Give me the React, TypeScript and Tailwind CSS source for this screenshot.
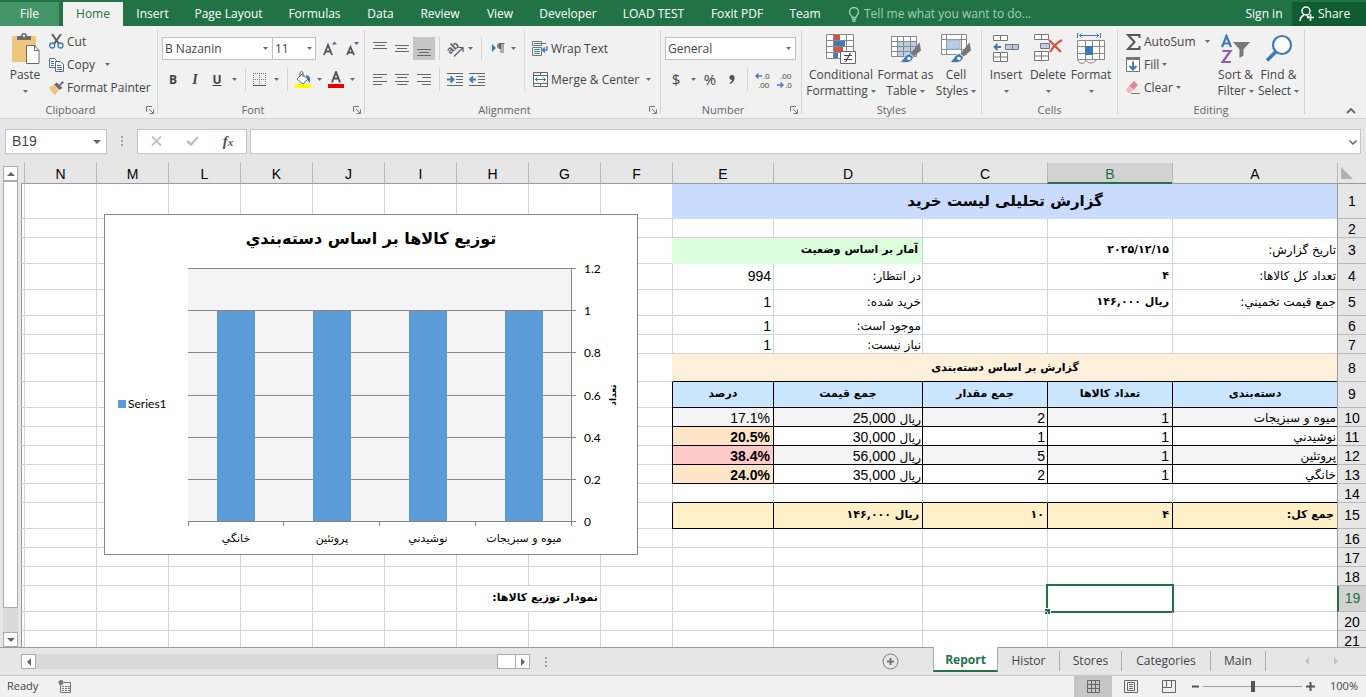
import React, { useState } from "react";

type Cell = { text?: React.ReactNode; span?: number; look?: string };
type Row = { n: number; h: string; cells: Cell[] };
type IconProps = { className?: string };

/* ---------- sheet data ---------- */

const FA = "font-['DejaVu_Sans',sans-serif]";
const grid = "border-[#d4d4d4]";
const label = `${FA} text-[12px] ${grid} pr-px`;
const strong = `${FA} text-[11px] font-bold ${grid} pr-[3px]`;
const num = `text-[14px] ${grid} pr-[2px]`;
const th = `${FA} text-[11px] font-bold border-black bg-[#cae6ff] text-center`;
const total = `${FA} text-[11px] font-bold border-black bg-[#fff0c8] pr-[3px]`;
const odd = "border-black bg-[#f3f3f3]";
const even = "border-black bg-white";

// padding keeps short rows low and tall rows slightly high
const low = "h-[19px] [&>*]:pt-[2px] [&>*]:leading-4";
const tall = "h-[26px] [&>*]:pb-[2px] [&>*]:leading-[18px]";

const price = (value: string) => (
  <>
    <span className={`${FA} text-[12px] leading-none`}>ریال</span> {value}
  </>
);

const item = (name: string, count: string, qty: string, sum: string, pct: string, bg: string, pctLook: string): Cell[] => [
  { text: name, look: `${FA} text-[12px] pr-px ${bg}` },
  { text: count, look: `text-[14px] pr-[3px] ${bg}` },
  { text: qty, look: `text-[14px] pr-[2px] ${bg}` },
  { text: price(sum), look: `text-[14px] pr-px ${bg}` },
  { text: pct, look: `text-[14px] pr-[3px] border-black ${pctLook}` },
];

const empty = (count: number): Cell[] => Array.from({ length: count }, () => ({ look: grid }));

const rows: Row[] = [
  { n: 1, h: "h-[35px]", cells: [{ text: "گزارش تحلیلی لیست خرید", span: 5, look: `${FA} text-[15px] font-bold text-center bg-[#c9dbff] border-[#c9dbff]` }, ...empty(9)] },
  { n: 2, h: low, cells: empty(14) },
  { n: 3, h: tall, cells: [{ text: "تاریخ گزارش:", look: label }, { text: "۲۰۲۵/۱۲/۱۵", look: strong }, { look: grid }, { text: "آمار بر اساس وضعیت", span: 2, look: `${FA} text-[11px] font-bold bg-[#dbffdc] border-[#dbffdc] pr-1` }, ...empty(9)] },
  { n: 4, h: tall, cells: [{ text: "تعداد کل کالاها:", look: label }, { text: "۴", look: strong }, { look: grid }, { text: "در انتظار:", look: label }, { text: "994", look: num }, ...empty(9)] },
  { n: 5, h: tall, cells: [{ text: "جمع قيمت تخميني:", look: label }, { text: "ریال ۱۴۶,۰۰۰", look: strong }, { look: grid }, { text: "خرید شده:", look: label }, { text: "1", look: num }, ...empty(9)] },
  { n: 6, h: low, cells: [...empty(3), { text: "موجود است:", look: label }, { text: "1", look: num }, ...empty(9)] },
  { n: 7, h: low, cells: [...empty(3), { text: "نیاز نیست:", look: label }, { text: "1", look: num }, ...empty(9)] },
  { n: 8, h: "h-[28px]", cells: [{ text: "گزارش بر اساس دسته‌بندی", span: 5, look: `${FA} text-[11px] font-bold text-center bg-[#fff0dc] border-l-[#fff0dc] border-b-black` }, ...empty(9)] },
  { n: 9, h: tall, cells: [{ text: "دسته‌بندی", look: th }, { text: "تعداد کالاها", look: th }, { text: "جمع مقدار", look: th }, { text: "جمع قیمت", look: th }, { text: "درصد", look: th }, ...empty(9)] },
  { n: 10, h: low, cells: [...item("میوه و سبزیجات", "1", "2", "25,000", "17.1%", odd, "bg-[#f3f3f3]"), ...empty(9)] },
  { n: 11, h: low, cells: [...item("نوشيدني", "1", "1", "30,000", "20.5%", even, "bg-[#ffe6c9] font-bold"), ...empty(9)] },
  { n: 12, h: low, cells: [...item("پروتئین", "1", "5", "56,000", "38.4%", odd, "bg-[#ffc8c9] font-bold"), ...empty(9)] },
  { n: 13, h: low, cells: [...item("خانگي", "1", "2", "35,000", "24.0%", even, "bg-[#ffe6c9] font-bold"), ...empty(9)] },
  { n: 14, h: low, cells: [...Array.from({ length: 5 }, () => ({ look: "border-l-[#d4d4d4] border-b-black" })), ...empty(9)] },
  { n: 15, h: tall, cells: [{ text: "جمع کل:", look: total }, { text: "۴", look: total }, { text: "۱۰", look: total }, { text: "ریال ۱۴۶,۰۰۰", look: total }, { look: total }, ...empty(9)] },
  { n: 16, h: low, cells: empty(14) },
  { n: 17, h: low, cells: empty(14) },
  { n: 18, h: low, cells: empty(14) },
  { n: 19, h: tall, cells: [...empty(6), { text: "نمودار توزیع کالاها:", span: 2, look: `${FA} text-[11px] font-bold ${grid} pr-[2px]` }, ...empty(6)] },
  { n: 20, h: low, cells: empty(14) },
  { n: 21, h: low, cells: empty(14) },
];

const columns: [string, string][] = [
  ["A", "w-[165px]"],
  ["B", "w-[125px]"],
  ["C", "w-[125px]"],
  ["D", "w-[149px]"],
  ["E", "w-[101px]"],
  ["F", "w-[72px]"],
  ["G", "w-[72px]"],
  ["H", "w-[72px]"],
  ["I", "w-[72px]"],
  ["J", "w-[72px]"],
  ["K", "w-[72px]"],
  ["L", "w-[72px]"],
  ["M", "w-[72px]"],
  ["N", "w-[72px]"],
];

/* ---------- small pieces ---------- */

const Caret = ({ className = "" }: IconProps) => (
  <svg width="5" height="3" viewBox="0 0 5 3" className={`shrink-0 ${className}`}>
    <path d="M0 0h5L2.5 3z" fill="#6a6a6a" />
  </svg>
);

const Launcher = ({ name }: { name: string }) => (
  <button type="button" aria-label={`${name} settings`} className="absolute right-1 bottom-1">
    <svg width="8" height="8" viewBox="0 0 8 8" fill="none" stroke="#777">
      <path d="M.5 5.500V.5H6M3 3l4 4M7.500 3.500v4h-4" />
    </svg>
  </button>
);

const Sep = () => <div className="h-[23px] w-px shrink-0 bg-[#d4d4d4]" />;

type GroupProps = { name: string; width: string; launcher?: boolean; children: React.ReactNode };

const Group = ({ name, width, launcher, children }: GroupProps) => (
  <section className={`relative flex shrink-0 ${width}`}>
    <div className="flex min-w-0 flex-1 flex-col pt-1">
      <div className="h-[72px]">{children}</div>
      <div className={`h-4 text-center text-[11px] leading-4 text-[#666] ${launcher ? "pr-4" : ""}`}>{name}</div>
    </div>
    {launcher && <Launcher name={name} />}
    <div className="my-1 w-px bg-[#d4d4d4]" />
  </section>
);

type ToolProps = { name: string; width?: string; active?: boolean; children: React.ReactNode };

const Tool = ({ name, width = "w-[22px]", active, children }: ToolProps) => (
  <button
    type="button"
    aria-label={name}
    className={`flex h-[23px] shrink-0 items-center justify-center ${width} ${active ? "bg-[#c6c6c6]" : ""}`}
  >
    {children}
  </button>
);

type BigProps = { width: string; icon: React.ReactNode; lines: [string, string?] };

const BigButton = ({ width, icon, lines }: BigProps) => (
  <button type="button" className={`flex shrink-0 flex-col items-center whitespace-nowrap text-[12px] leading-4 ${width}`}>
    <span className="flex h-[37px] items-center">{icon}</span>
    <span>{lines[0]}</span>
    <span className="flex h-4 items-center gap-[3px]">
      {lines[1]}
      <Caret />
    </span>
  </button>
);

type SmallProps = { icon: React.ReactNode; text: string; caret?: string };

const SmallButton = ({ icon, text, caret }: SmallProps) => (
  <button type="button" className="flex h-[23px] items-center whitespace-nowrap text-[12px]">
    <span className="mr-[3px] flex w-4 justify-center">{icon}</span>
    {text}
    {caret && <Caret className={caret} />}
  </button>
);

/* ---------- ribbon icons ---------- */

const PasteIcon = () => (
  <svg width="29" height="31" viewBox="0 0 29 31">
    <path d="M1 3h24v26H1z" fill="#eec67e" />
    <path d="M6 3h4c0-4 6-4 6 0h4v4H6z" fill="#6b6b6b" />
    <circle cx="13" cy="2.800" r="1.200" fill="#f1f1f1" />
    <path d="M15.500 12.500h8l4.500 5v13H15.500z" fill="#fff" stroke="#6b6b6b" />
    <path d="M23.500 12.500v5H28" fill="none" stroke="#6b6b6b" />
  </svg>
);

const CutIcon = () => (
  <svg width="15" height="15" viewBox="0 0 15 15" fill="none">
    <path d="M3 0l7 10M12 0L5 10" stroke="#5f5f5f" strokeWidth="2" />
    <circle cx="3.200" cy="11.500" r="2.500" stroke="#3f7ab8" strokeWidth="1.300" />
    <circle cx="11.500" cy="11.500" r="2.500" stroke="#3f7ab8" strokeWidth="1.300" />
  </svg>
);

const CopyIcon = () => (
  <svg width="15" height="14" viewBox="0 0 15 14" fill="#fff" stroke="#5f6e80">
    <path d="M.5.5h5l2 2v7h-7z" />
    <path d="M2 3.500h3M2 5.500h3M2 7.500h3" stroke="#3f7ab8" />
    <path d="M6.500 3.500h5l3 3v7h-8z" />
    <path d="M8 7.500h4M8 9.500h5M8 11.500h5" stroke="#3f7ab8" />
  </svg>
);

const PainterIcon = () => (
  <svg width="15" height="14" viewBox="0 0 15 14">
    <path d="M0 6l5-2 5 5-4 5c-2-1-4-4-6-8z" fill="#eec67e" />
    <path d="M5 3.500l3-2 5.500 5.500-3 2z" fill="#6b6b6b" />
    <path d="M10 4l3.500-4L15 1.500 11 5z" fill="#6b6b6b" />
  </svg>
);

const FontSizeIcon = ({ up }: { up: boolean }) => (
  <svg width="14" height="15" viewBox="0 0 14 15">
    {up ? (
      <path d="M1 14L5 4l4 10M2.500 10.500h5" fill="none" stroke="#555" strokeWidth="1.800" />
    ) : (
      <path d="M2 14l3.500-8L9 14M3.500 11.500h4" fill="none" stroke="#555" strokeWidth="1.800" />
    )}
    <path d={up ? "M9 3.500L11.500.5 14 3.500z" : "M9 1h5l-2.500 3z"} fill="#3f6fa8" />
  </svg>
);

const BorderIcon = () => (
  <svg width="13" height="13" viewBox="0 0 13 13" fill="none" stroke="#777">
    <path d="M0 .5h13M.5 0v13M12.500 0v13M6.500 0v13M0 6.500h13" strokeDasharray="1 1" />
    <path d="M0 12.500h13" stroke="#555" />
  </svg>
);

const BucketIcon = () => (
  <svg width="17" height="17" viewBox="0 0 17 17">
    <path d="M7 3l6 5-5 5-6-5z" fill="#fff" stroke="#666" />
    <path d="M5 6V2c0-2 3-2 3 0v4" fill="none" stroke="#666" />
    <path d="M11 4c4 0 5 4 3.500 8L12 8z" fill="#3f7ab8" />
    <path d="M0 13h16v4H0z" fill="#ffff00" />
  </svg>
);

const FontColorIcon = () => (
  <svg width="16" height="17" viewBox="0 0 16 17">
    <path d="M4 11.500L8 1l4 10.500M5.500 7.500h5" fill="none" stroke="#555" strokeWidth="2" />
    <path d="M0 13h16v4H0z" fill="#e80000" />
  </svg>
);

const LinesIcon = ({ d }: { d: string }) => (
  <svg width="14" height="14" viewBox="0 0 14 14" fill="none" stroke="#666">
    <path d={d} />
  </svg>
);

const OrientationIcon = () => (
  <svg width="17" height="16" viewBox="0 0 17 16" className="overflow-visible">
    <text x="0" y="11" transform="rotate(-42 5 8)" fontSize="11" fontWeight="700" fill="#5a5a5a" className="font-['Liberation_Sans',sans-serif]">
      ab
    </text>
    <path d="M7 15.500l8.500-8.500M11.500 6.500h4.500V11" fill="none" stroke="#5a5a5a" strokeWidth="1.200" />
  </svg>
);

const RtlIcon = () => (
  <svg width="13" height="11" viewBox="0 0 13 11">
    <path d="M0 1l4 4-4 4z" fill="#3f7ab8" />
    <path d="M12.500.5H8a2.500 2.500 0 000 5h.5M9 .5V10M11 .5V10" fill="none" stroke="#666" />
    <path d="M6 1h3v5H7z" fill="#666" />
  </svg>
);

const IndentIcon = ({ arrow }: { arrow: string }) => (
  <svg width="16" height="14" viewBox="0 0 16 14" fill="none" stroke="#666">
    <path d="M0 .5h16M9 3.500h7M9 6.500h7M9 9.500h7M0 12.500h16" />
    <path d={arrow} stroke="#3f7ab8" strokeWidth="1.800" />
  </svg>
);

const WrapIcon = () => (
  <svg width="16" height="15" viewBox="0 0 16 15" fill="none">
    <path d="M.5.5h9v4h-9zM.5 6.500h9v8h-9z" fill="#fff" stroke="#777" />
    <path d="M2 2.500h12M2 8.500h6M2 10.500h6M2 12.500h6" stroke="#3f7ab8" />
    <path d="M15 5v4h-4M13 6.500L10.500 9l2.500 2.500" stroke="#3f7ab8" strokeWidth="1.300" />
  </svg>
);

const MergeIcon = () => (
  <svg width="15" height="15" viewBox="0 0 15 15" fill="none">
    <path d="M.5.5h14v14H.5z" fill="#fff" stroke="#666" />
    <path d="M0 3.500h15M0 11.500h15M7.500 0v3M7.500 12v3" stroke="#666" />
    <path d="M2 7.500h11M4.500 5.500l-2 2 2 2M10.500 5.500l2 2-2 2" stroke="#3f7ab8" />
  </svg>
);

const DecimalIcon = ({ more }: { more: boolean }) => (
  <svg width="16" height="20" viewBox="0 0 16 20" fontSize="8" fill="#444" className="overflow-visible font-['Liberation_Sans',sans-serif]">
    <text x={more ? 8 : 3} y="9">{more ? ".0" : ".00"}</text>
    <text x={more ? 3 : 8} y="18">{more ? ".00" : ".0"}</text>
    <path
      d={more ? "M7 6H1M3.500 3.500L1 6l2.500 2.500" : "M0 15h6M3.500 12.500L6 15l-2.500 2.500"}
      fill="none"
      stroke="#3f7ab8"
      strokeWidth="1.300"
    />
  </svg>
);

const CommaIcon = () => (
  <svg width="6" height="9" viewBox="0 0 6 9" fill="#555">
    <path d="M3 0c4 0 3.500 7-2 9L.5 8C2 7 3 6 3 5-.5 5-.5 0 3 0z" />
  </svg>
);

const ConditionalIcon = () => (
  <svg width="30" height="31" viewBox="0 0 30 31">
    <path d="M.5 1.500h27v24H.5z" fill="#fff" />
    <path d="M8 2h6v5H8zM8 14h9v5H8z" fill="#d9513c" />
    <path d="M8 8h11v5H8zM8 20h4v5H8z" fill="#3f7ab8" />
    <path d="M.5 1.500h27v24H.5zM.5 7.500h27M.5 13.500h27M.5 19.500h27M7.500 1.500v24M20.500 1.500v24" fill="none" stroke="#888" />
    <path d="M14.500 18.500h15v12h-15z" fill="#fff" stroke="#666" />
    <path d="M18 22.500h8M18 26.500h8M24.500 20l-5 9" fill="none" stroke="#444" strokeWidth="1.200" />
  </svg>
);

const Brush = () => (
  <>
    <path d="M28.500 8.500l1.500 8-7.500 6-3-3z" fill="#777" />
    <path d="M18.500 19.500l4 3.500c-1 5-6 7-14 5 4-1 4-7 10-8.500z" fill="#3f7ab8" stroke="#f1f1f1" />
    <circle cx="18" cy="24.500" r="1.800" fill="#fff" />
  </>
);

const FormatTableIcon = () => (
  <svg width="30" height="30" viewBox="0 0 30 30">
    <path d="M.5 2.500h25v20H.5z" fill="#fff" />
    <path d="M7 7h18v15H7z" fill="#b8cde4" />
    <path d="M.5 2.500h25v20H.5zM.5 7.500h25M.5 12.500h25M.5 17.500h25M6.500 2.500v20M12.500 2.500v20M19.500 2.500v20" fill="none" stroke="#888" />
    <Brush />
  </svg>
);

const CellStylesIcon = () => (
  <svg width="30" height="30" viewBox="0 0 30 30">
    <path d="M.5.5h25v20H.5zM.5 5.500h25M.5 15.500h25M5.500.5v20M20.500.5v20" fill="#fff" stroke="#888" />
    <path d="M6 6h13v9H6z" fill="#b8cde4" stroke="#9fb6d0" />
    <Brush />
  </svg>
);

const InsertIcon = () => (
  <svg width="27" height="28" viewBox="0 0 27 28" fill="#fff" stroke="#777">
    <path d="M.5.5h14v5H.5zM7.500.5v5M.5 17.500h14v9H.5zM.5 22h14M7.500 17.500v9" />
    <path d="M12.500 9.500h13v5h-13zM19.500 9.500v5" fill="#b8cde4" />
    <path d="M8 12H2M4.500 9L1.500 12l3 3" fill="none" stroke="#3f7ab8" strokeWidth="1.800" />
  </svg>
);

const DeleteIcon = () => (
  <svg width="29" height="29" viewBox="0 0 29 29" fill="#fff" stroke="#777">
    <path d="M.5.5h14v5H.5zM7.500.5v5M.5 17.500h14v9H.5zM.5 22h14M7.500 17.500v9" />
    <path d="M6.500 9.500h9v5h-9z" fill="#b8cde4" />
    <path d="M15 6l12 12M28 6c-6 3-9 7-12 12" fill="none" stroke="#d9513c" strokeWidth="2.200" />
  </svg>
);

const FormatIcon = () => (
  <svg width="29" height="32" viewBox="0 0 29 32" fill="none">
    <path d="M.5 7.500h27v19H.5z" fill="#fff" />
    <path d="M.5 7.500h27v19H.5zM.5 13.500h27M.5 20.500h27M8.500 7.500v19M15.500 7.500v19M22.500 7.500v19" stroke="#888" />
    <path d="M8 13h8v9H8z" fill="#3f7ab8" />
    <path d="M1 27c0 4 7 5 8 0 2 4 8 4 10 0" stroke="#888" />
    <path d="M.5 0v5M23.500 0v5M2 2.500h20M4.500.5l-2 2 2 2M19.500.5l2 2-2 2" stroke="#3f7ab8" />
  </svg>
);

const SumIcon = () => (
  <svg width="15" height="16" viewBox="0 0 15 16" fill="none" stroke="#555" strokeWidth="2">
    <path d="M13.500 4V1H2l6.500 7L2 15h11.500v-3" />
  </svg>
);

const FillIcon = () => (
  <svg width="14" height="15" viewBox="0 0 14 15" fill="none">
    <path d="M.5.5h13v14H.5z" fill="#fff" stroke="#777" />
    <path d="M0 0h14v3H0z" fill="#777" />
    <path d="M7 4.500v8M3.500 9L7 12.500 10.500 9" stroke="#3f7ab8" strokeWidth="2" />
  </svg>
);

const EraserIcon = () => (
  <svg width="14" height="13" viewBox="0 0 14 13">
    <path d="M8 0l4 4-4.500 5L3 5z" fill="#e8849a" />
    <path d="M2.500 5.500L7 9.500 4.500 12H2L0 9z" fill="#f3b4c1" />
    <path d="M5 12.500h9" stroke="#777" />
  </svg>
);

const SortIcon = () => (
  <svg width="30" height="30" viewBox="0 0 30 30">
    <path d="M1 13L5.500 2 10 13M2.500 9.500h6" fill="none" stroke="#3f7ab8" strokeWidth="2.200" />
    <path d="M1.500 17h8l-8 11h8.500" fill="none" stroke="#8d5bb0" strokeWidth="2.200" />
    <path d="M12 8h17l-6.500 7.500v6L18.500 24v-8.500z" fill="#777" />
  </svg>
);

const FindIcon = () => (
  <svg width="28" height="29" viewBox="0 0 28 29" fill="none" stroke="#3f7ab8">
    <circle cx="17" cy="11" r="9" fill="#fff" strokeWidth="2.200" />
    <path d="M10.500 18L2 26.500" strokeWidth="3.500" />
  </svg>
);

/* ---------- title tabs ---------- */

const tabs: [string, string][] = [
  ["Insert", "w-[59px]"],
  ["Page Layout", "w-[93px]"],
  ["Formulas", "w-[79px]"],
  ["Data", "w-[53px]"],
  ["Review", "w-[66px]"],
  ["View", "w-[54px]"],
  ["Developer", "w-[82px]"],
  ["LOAD TEST", "w-[89px]"],
  ["Foxit PDF", "w-[78px]"],
  ["Team", "w-[58px]"],
];

const TabBar = () => (
  <nav className="flex h-[26px] shrink-0 bg-[#217346] pt-[2px] text-[12px] text-white">
    <button type="button" className="mr-1 w-[59px] bg-[#439467]">File</button>
    <button type="button" className="w-[60px] bg-[#f1f1f1] text-[#217346]">Home</button>
    {tabs.map(([name, width]) => (
      <button key={name} type="button" className={`shrink-0 whitespace-nowrap ${width}`}>
        {name}
      </button>
    ))}
    <label className="ml-[14px] flex items-center gap-1">
      <svg width="12" height="15" viewBox="0 0 12 15" fill="none" stroke="#a6cdb6" strokeWidth="1.300">
        <path d="M4 10.500c0-2-2.500-3-2.500-5.500a4.500 4.500 0 019 0c0 2.500-2.500 3.500-2.500 5.500zM4 12.500h4M4.500 14.300h3" />
      </svg>
      <input
        type="text"
        aria-label="Tell me"
        placeholder="Tell me what you want to do..."
        className="w-[180px] bg-transparent outline-none placeholder:text-[#a6cdb6]"
      />
    </label>
    <button type="button" className="ml-auto w-[56px] whitespace-nowrap">Sign in</button>
    <button type="button" className="flex w-[74px] items-center gap-1 bg-[#0e5c2f] pl-[7px]">
      <svg width="15" height="16" viewBox="0 0 15 16" fill="none" stroke="#fff" strokeWidth="1.500">
        <circle cx="7" cy="5" r="4" />
        <path d="M1 15c0-3 2-5 4-6M8 9.500l1.500 1.500M11.500 8v7M8 11.500h7" />
      </svg>
      Share
    </button>
  </nav>
);

/* ---------- ribbon ---------- */

const combo = "block h-[23px] w-full appearance-none border border-[#c0c0c0] bg-white px-[2px] text-[12px]";

const Ribbon = () => (
  <div className="relative flex h-[93px] shrink-0 border-b border-[#d2d2d2] bg-[#f1f1f1] text-[#444]">
    <Group name="Clipboard" width="w-[158px]" launcher>
      <div className="flex pl-[2px]">
        <BigButton width="w-[46px]" icon={<PasteIcon />} lines={["Paste"]} />
        <div className="flex flex-col">
          <SmallButton icon={<CutIcon />} text="Cut" />
          <SmallButton icon={<CopyIcon />} text="Copy" caret="ml-[10px]" />
          <SmallButton icon={<PainterIcon />} text="Format Painter" />
        </div>
      </div>
    </Group>

    <Group name="Font" width="w-[207px]" launcher>
      <div className="flex flex-col gap-2 pt-[7px] pl-1">
        <div className="flex">
          <div className="relative w-[111px]">
            <select aria-label="Font" className={combo}>
              <option>B Nazanin</option>
            </select>
            <Caret className="pointer-events-none absolute top-[10px] right-[5px]" />
          </div>
          <div className="relative mr-[3px] w-[43px]">
            <select aria-label="Font size" className={`${combo} border-l-0`}>
              <option>11</option>
            </select>
            <Caret className="pointer-events-none absolute top-[10px] right-1" />
          </div>
          <Tool name="Increase font size"><FontSizeIcon up /></Tool>
          <Tool name="Decrease font size"><FontSizeIcon up={false} /></Tool>
        </div>
        <div className="flex">
          <Tool name="Bold"><span className="text-[12px] font-bold">B</span></Tool>
          <Tool name="Italic"><span className="font-['Liberation_Serif',serif] text-[14px] font-bold italic">I</span></Tool>
          <Tool name="Underline"><span className="text-[12px] font-bold underline">U</span></Tool>
          <Tool name="Underline style" width="w-[12px]"><Caret /></Tool>
          <div className="w-[5px]" />
          <Sep />
          <div className="w-[2px]" />
          <Tool name="Borders"><BorderIcon /></Tool>
          <Tool name="Border style" width="w-[12px]"><Caret /></Tool>
          <div className="w-[5px]" />
          <Sep />
          <div className="w-[4px]" />
          <Tool name="Fill color"><BucketIcon /></Tool>
          <Tool name="Fill color list" width="w-[11px]"><Caret /></Tool>
          <Tool name="Font color"><FontColorIcon /></Tool>
          <Tool name="Font color list" width="w-[11px]"><Caret /></Tool>
        </div>
      </div>
    </Group>

    <Group name="Alignment" width="w-[296px]" launcher>
      <div className="flex">
        <div className="flex w-[159px] flex-col gap-2 pt-[7px] pl-1">
          <div className="flex">
            <Tool name="Top align"><LinesIcon d="M0 .5h14M2 3.500h10M0 6.500h14" /></Tool>
            <Tool name="Middle align"><LinesIcon d="M0 3.500h14M2 6.500h10M0 9.500h14" /></Tool>
            <Tool name="Bottom align" active><LinesIcon d="M0 7.500h14M2 10.500h10M0 13.500h14" /></Tool>
            <div className="w-1" />
            <Sep />
            <div className="w-1" />
            <Tool name="Orientation"><OrientationIcon /></Tool>
            <Tool name="Orientation list" width="w-[8px]"><Caret /></Tool>
            <div className="w-[7px]" />
            <Sep />
            <div className="w-[5px]" />
            <Tool name="Text direction"><RtlIcon /></Tool>
            <Tool name="Text direction list" width="w-[8px]"><Caret /></Tool>
          </div>
          <div className="flex">
            <Tool name="Align left"><LinesIcon d="M0 1.500h14M0 4.500h9M0 8.500h14M0 11.500h9" /></Tool>
            <Tool name="Center"><LinesIcon d="M0 1.500h14M2 4.500h10M0 8.500h14M2 11.500h10" /></Tool>
            <Tool name="Align right"><LinesIcon d="M0 1.500h14M5 4.500h9M0 8.500h14M5 11.500h9" /></Tool>
            <div className="w-1" />
            <Sep />
            <div className="w-1" />
            <Tool name="Increase indent"><IndentIcon arrow="M0 6.500h6M3.500 3.500l3 3-3 3" /></Tool>
            <Tool name="Decrease indent"><IndentIcon arrow="M7 6.500H1M4 3.500l-3 3 3 3" /></Tool>
          </div>
        </div>
        <div className="h-[62px] w-px bg-[#dcdcdc]" />
        <div className="flex flex-col gap-2 pt-[7px] pl-[7px]">
          <SmallButton icon={<WrapIcon />} text="Wrap Text" />
          <SmallButton icon={<MergeIcon />} text="Merge & Center" caret="ml-[7px]" />
        </div>
      </div>
    </Group>

    <Group name="Number" width="w-[141px]" launcher>
      <div className="flex flex-col gap-2 pt-[7px] pl-1">
        <div className="relative w-[131px]">
          <select aria-label="Number format" className={combo}>
            <option>General</option>
          </select>
          <Caret className="pointer-events-none absolute top-[10px] right-[5px]" />
        </div>
        <div className="flex">
          <Tool name="Currency"><span className="text-[15px]">$</span></Tool>
          <Tool name="Currency list" width="w-[12px]"><Caret /></Tool>
          <Tool name="Percent"><span className="text-[15px]">%</span></Tool>
          <Tool name="Comma style"><CommaIcon /></Tool>
          <div className="w-1" />
          <Sep />
          <div className="w-1" />
          <Tool name="Increase decimal"><DecimalIcon more /></Tool>
          <Tool name="Decrease decimal"><DecimalIcon more={false} /></Tool>
        </div>
      </div>
    </Group>

    <Group name="Styles" width="w-[180px]">
      <div className="flex pl-[3px]">
        <BigButton width="w-[72px]" icon={<ConditionalIcon />} lines={["Conditional", "Formatting"]} />
        <BigButton width="w-[57px]" icon={<FormatTableIcon />} lines={["Format as", "Table"]} />
        <BigButton width="w-[44px]" icon={<CellStylesIcon />} lines={["Cell", "Styles"]} />
      </div>
    </Group>

    <Group name="Cells" width="w-[136px]">
      <div className="flex pl-[3px]">
        <BigButton width="w-[42px]" icon={<InsertIcon />} lines={["Insert"]} />
        <BigButton width="w-[42px]" icon={<DeleteIcon />} lines={["Delete"]} />
        <BigButton width="w-[44px]" icon={<FormatIcon />} lines={["Format"]} />
      </div>
    </Group>

    <Group name="Editing" width="w-[187px]">
      <div className="flex pl-[7px]">
        <div className="flex w-[89px] flex-col items-start">
          <SmallButton icon={<SumIcon />} text="AutoSum" caret="ml-[9px]" />
          <SmallButton icon={<FillIcon />} text="Fill" caret="ml-[3px]" />
          <SmallButton icon={<EraserIcon />} text="Clear" caret="ml-[3px]" />
        </div>
        <BigButton width="w-[43px]" icon={<SortIcon />} lines={["Sort &", "Filter"]} />
        <BigButton width="w-[43px]" icon={<FindIcon />} lines={["Find &", "Select"]} />
      </div>
    </Group>

    <button type="button" aria-label="Collapse the ribbon" className="mt-auto mr-[10px] mb-1 ml-auto">
      <svg width="10" height="7" viewBox="0 0 10 7" fill="none" stroke="#666" strokeWidth="1.800">
        <path d="M1 6l4-4 4 4" />
      </svg>
    </button>
  </div>
);

const Dots = () => (
  <svg width="3" height="11" viewBox="0 0 3 11" fill="#a0a0a0">
    <path d="M0 0h2v2H0zM0 4h2v2H0zM0 8h2v2H0z" />
  </svg>
);

const FormulaBar = () => (
  <div className="flex h-[44px] shrink-0 items-center px-[5px]">
    <div className="relative w-[102px]">
      <input
        type="text"
        aria-label="Name box"
        defaultValue="B19"
        className="block h-[25px] w-full border border-[#c6c6c6] bg-white px-[6px] font-['Liberation_Sans',sans-serif] text-[14px] text-[#444] outline-none"
      />
      <svg width="8" height="4" viewBox="0 0 8 4" className="pointer-events-none absolute top-[11px] right-[6px]">
        <path d="M0 0h8L4 4z" fill="#666" />
      </svg>
    </div>
    <div className="flex w-[30px] justify-center"><Dots /></div>
    <div className="flex h-[25px] w-[110px] items-center border border-[#c6c6c6] bg-white">
      <button type="button" aria-label="Cancel" className="flex flex-1 justify-center">
        <svg width="11" height="10" viewBox="0 0 11 10" stroke="#c0c0c0" strokeWidth="1.800">
          <path d="M1 .5l9 9M10 .5l-9 9" />
        </svg>
      </button>
      <button type="button" aria-label="Enter" className="flex flex-1 justify-center">
        <svg width="13" height="10" viewBox="0 0 13 10" fill="none" stroke="#c0c0c0" strokeWidth="2.400">
          <path d="M1 5l4 3.500L12 1" />
        </svg>
      </button>
      <button type="button" aria-label="Insert function" className="flex-1 font-['Liberation_Serif',serif] text-[15px] leading-none font-bold text-[#555] italic">
        f<span className="text-[11px]">x</span>
      </button>
    </div>
    <div className="relative ml-[3px] flex-1">
      <input type="text" aria-label="Formula" className="block h-[25px] w-full border border-[#c6c6c6] bg-white px-2 text-[14px] outline-none" />
      <svg width="8" height="5" viewBox="0 0 8 5" className="pointer-events-none absolute top-[11px] right-1" fill="none" stroke="#666" strokeWidth="1.500">
        <path d="M.5.5L4 4 7.500.5" />
      </svg>
    </div>
  </div>
);

/* ---------- chart ---------- */

const bars = [
  { x: 113, label: "خانگي" },
  { x: 209, label: "پروتئین" },
  { x: 305, label: "نوشيدني" },
  { x: 401, label: "میوه و سبزیجات" },
];

const scale = [
  { y: 54.5, label: "1.2" },
  { y: 96.5, label: "1" },
  { y: 138.5, label: "0.8" },
  { y: 181.5, label: "0.6" },
  { y: 223.5, label: "0.4" },
  { y: 265.5, label: "0.2" },
  { y: 307.5, label: "0" },
];

const Chart = () => (
  <svg width="534" height="341" viewBox="0 0 534 341" className="absolute top-[51px] right-[728px]">
    <rect x=".5" y=".5" width="533" height="340" fill="#fff" stroke="#868686" />
    <rect x="84" y="54" width="384" height="254" fill="#f4f4f4" />
    {scale.map((s) => (
      <g key={s.label}>
        <path d={`M84 ${s.y}h388`} stroke="#868686" />
        <text x="480" y={s.y + 4} fontSize="12" className="font-['Lato',sans-serif]">{s.label}</text>
      </g>
    ))}
    {bars.map((b) => (
      <g key={b.label}>
        <rect x={b.x} y="97" width="38" height="210" fill="#5b9bd5" />
        <text x={b.x + 19} y="328" fontSize="11" textAnchor="middle" className="font-['DejaVu_Sans',sans-serif]">{b.label}</text>
      </g>
    ))}
    <path d="M467.500 54v258M84.500 308v4M179.500 308v4M275.500 308v4M371.500 308v4" stroke="#868686" />
    <text x="267" y="30" fontSize="16" fontWeight="700" textAnchor="middle" className="font-['DejaVu_Sans',sans-serif]">
      توزیع کالاها بر اساس دسته‌بندي
    </text>
    <text x="0" y="0" fontSize="9" fontWeight="700" textAnchor="middle" transform="translate(512 181) rotate(-90)" className="font-['DejaVu_Sans',sans-serif]">
      تعداد
    </text>
    <rect x="14" y="186" width="8" height="8" fill="#5b9bd5" />
    <text x="24" y="194" fontSize="12" className="font-['Lato',sans-serif]">Series1</text>
  </svg>
);

/* ---------- sheet ---------- */

const Sheet = () => (
  <div className="relative min-w-0 flex-1 overflow-hidden">
    <table dir="rtl" className="w-full table-fixed border-separate border-spacing-0 font-['Liberation_Sans',sans-serif] text-black">
      <colgroup>
        <col className="w-[29px]" />
        {columns.map(([name, width]) => (
          <col key={name} className={width} />
        ))}
        <col />
      </colgroup>
      <thead>
        <tr className="h-[21px]">
          <th aria-label="Select all" className="border-b border-l border-[#9b9b9b] border-l-[#b8b8b8] p-0">
            <svg width="12" height="12" viewBox="0 0 12 12" className="mr-[13px]">
              <path d="M0 0v12h12z" fill="#b1b1b1" />
            </svg>
          </th>
          {columns.map(([name]) => (
            <th
              key={name}
              scope="col"
              className={`p-0 pt-[2px] text-[14px] leading-4 font-normal ${
                name === "B"
                  ? "border-b-2 border-l border-b-[#217346] border-l-[#b8b8b8] bg-[#d2d2d2] text-[#217346]"
                  : "border-b border-l border-b-[#9b9b9b] border-l-[#b8b8b8]"
              }`}
            >
              {name}
            </th>
          ))}
          <td className="border-b border-[#9b9b9b]" />
        </tr>
      </thead>
      <tbody className="bg-white">
        {rows.map((row) => (
          <tr key={row.n} className={row.h}>
            <th
              scope="row"
              className={`border-b p-0 text-[14px] leading-[18px] font-normal ${
                row.n === 19
                  ? "border-l-2 border-b-[#b8b8b8] border-l-[#217346] bg-[#d2d2d2] text-[#217346]"
                  : "border-l border-b-[#b8b8b8] border-l-[#9b9b9b] bg-[#e6e6e6]"
              }`}
            >
              {row.n}
            </th>
            {row.cells.map((cell, i) => (
              <td
                key={i}
                colSpan={cell.span}
                className={`relative border-b border-l p-0 leading-[18px] whitespace-nowrap ${cell.look ?? ""}`}
              >
                {cell.text}
                {row.n === 19 && i === 1 && (
                  <span className="absolute -inset-x-[2px] -top-[2px] -bottom-[2px] border-2 border-[#217346]">
                    <span className="absolute -bottom-[3px] -left-[3px] size-[6px] border-t border-r border-white bg-[#217346]" />
                  </span>
                )}
              </td>
            ))}
            <td className="border-b border-l border-b-[#d4d4d4] border-l-[#9b9b9b] p-0" />
          </tr>
        ))}
      </tbody>
    </table>
    <Chart />
  </div>
);

const Arrow = ({ d, fill = "#666" }: { d: string; fill?: string }) => (
  <svg width="8" height="8" viewBox="0 0 8 8">
    <path d={d} fill={fill} />
  </svg>
);

const box = "flex size-[15px] shrink-0 items-center justify-center border border-[#ababab] bg-white";

const sheets: [string, string][] = [
  ["Report", "w-[65px]"],
  ["Histor", "w-[62px]"],
  ["Stores", "w-[62px]"],
  ["Categories", "w-[89px]"],
  ["Main", "w-[55px]"],
];

const SheetTabs = () => {
  const [current, setCurrent] = useState("Report");

  return (
    <div className="flex h-[28px] shrink-0 border-t border-[#9b9b9b] pl-[21px]">
      <div className="mt-[6px] flex h-[15px] w-[509px] bg-[#dadada]">
        <button type="button" aria-label="Scroll left" className={box}><Arrow d="M6 0v8L2 4z" /></button>
        <div className="ml-auto w-[18px] border border-r-0 border-[#ababab] bg-white" />
        <button type="button" aria-label="Scroll right" className={box}><Arrow d="M2 0v8l4-4z" /></button>
      </div>
      <div className="mt-[9px] ml-[15px]"><Dots /></div>
      <button type="button" aria-label="New sheet" className="mr-[34px] mb-[1px] ml-auto">
        <svg width="17" height="17" viewBox="0 0 17 17" fill="none" stroke="#777">
          <circle cx="8.500" cy="8.500" r="7.500" />
          <path d="M8.500 5v7M5 8.500h7" strokeWidth="2" />
        </svg>
      </button>
      {sheets.map(([name, width]) => (
        <button
          key={name}
          type="button"
          onClick={() => setCurrent(name)}
          className={`-mt-px text-[12px] ${width} ${
            current === name
              ? "mb-[3px] border-x border-b-2 border-x-[#ababab] border-b-[#217346] bg-white pt-[3px] font-bold text-[#217346]"
              : "mt-[3px] mb-1 border-r border-[#ababab] text-[#444]"
          }`}
        >
          {name}
        </button>
      ))}
      <div className="flex w-[100px] items-center justify-end gap-[21px] pr-[26px] pb-[2px]">
        <Arrow d="M6 0v8L2 4z" fill="#c0c0c0" />
        <Arrow d="M2 0v8l4-4z" fill="#c0c0c0" />
      </div>
    </div>
  );
};

const StatusBar = () => (
  <footer className="flex h-[22px] shrink-0 items-center border-t border-[#c6c6c6] bg-[#f1f1f1] pr-2 pl-[7px] text-[11px] text-[#444]">
    <span>Ready</span>
    <button type="button" aria-label="Macro recording" className="ml-5">
      <svg width="13" height="13" viewBox="0 0 13 13" fill="none" stroke="#777">
        <path d="M2.500 5v7.500h10V2.500H6" />
        <path d="M6 2.500h7M4 6.500h2M7 6.500h2M10 6.500h2M4 8.500h2M7 8.500h2M10 8.500h2M4 10.500h2M7 10.500h2M10 10.500h2" />
        <circle cx="3" cy="2.500" r="2.500" fill="#777" stroke="none" />
      </svg>
    </button>
    <button type="button" aria-label="Normal view" className="ml-auto flex h-full w-[38px] items-center justify-center bg-[#c6c6c6]">
      <svg width="13" height="13" viewBox="0 0 13 13" fill="none" stroke="#666">
        <path d="M.5.5h12v12H.5zM4.500 0v13M8.500 0v13M0 4.500h13M0 8.500h13" />
      </svg>
    </button>
    <button type="button" aria-label="Page layout view" className="flex w-[38px] justify-center">
      <svg width="14" height="13" viewBox="0 0 14 13" fill="none" stroke="#666">
        <path d="M.5.5h13v12H.5zM3.500 2.500h7v8h-7zM5 4.500h4M5 6.500h4M5 8.500h4" />
      </svg>
    </button>
    <button type="button" aria-label="Page break view" className="flex w-[38px] justify-center">
      <svg width="14" height="13" viewBox="0 0 14 13" fill="none" stroke="#666">
        <path d="M.5.5h13v12H.5zM4.500 1v6.500h5V1M0 7.500h4" />
      </svg>
    </button>
    <button type="button" aria-label="Zoom out" className="ml-1 flex w-[11px]">
      <svg width="7" height="7" viewBox="0 0 7 7"><path d="M0 2.500h7v2H0z" fill="#555" /></svg>
    </button>
    <input
      type="range"
      aria-label="Zoom"
      min={0}
      max={200}
      defaultValue={100}
      className="h-[12px] w-[99px] appearance-none bg-transparent bg-[linear-gradient(#a0a0a0,#a0a0a0)] bg-[length:100%_1px] bg-center bg-no-repeat [&::-webkit-slider-thumb]:h-[11px] [&::-webkit-slider-thumb]:w-1 [&::-webkit-slider-thumb]:appearance-none [&::-webkit-slider-thumb]:bg-[#555]"
    />
    <button type="button" aria-label="Zoom in" className="ml-1">
      <svg width="9" height="9" viewBox="0 0 9 9"><path d="M0 3.500h9v2H0zM3.500 0h2v9h-2z" fill="#555" /></svg>
    </button>
    <span className="w-[43px] text-right">100%</span>
  </footer>
);

const App: React.FC = () => (
  <div className="flex h-screen flex-col overflow-hidden bg-[#e6e6e6] font-['Open_Sans',sans-serif]">
    <TabBar />
    <Ribbon />
    <FormulaBar />
    <main className="flex min-h-0 flex-1">
      <div className="flex w-[21px] shrink-0 flex-col pt-[3px] pl-[3px]">
        <button type="button" aria-label="Scroll up" className={box}><Arrow d="M0 6h8L4 2z" /></button>
        <div className="flex w-[15px] flex-1 flex-col bg-[#dadada]">
          <div className="flex-1 border border-[#ababab] bg-white" />
          <div className="h-6" />
        </div>
        <button type="button" aria-label="Scroll down" className={box}><Arrow d="M0 2h8L4 6z" /></button>
      </div>
      <Sheet />
    </main>
    <SheetTabs />
    <StatusBar />
  </div>
);

export default App;
